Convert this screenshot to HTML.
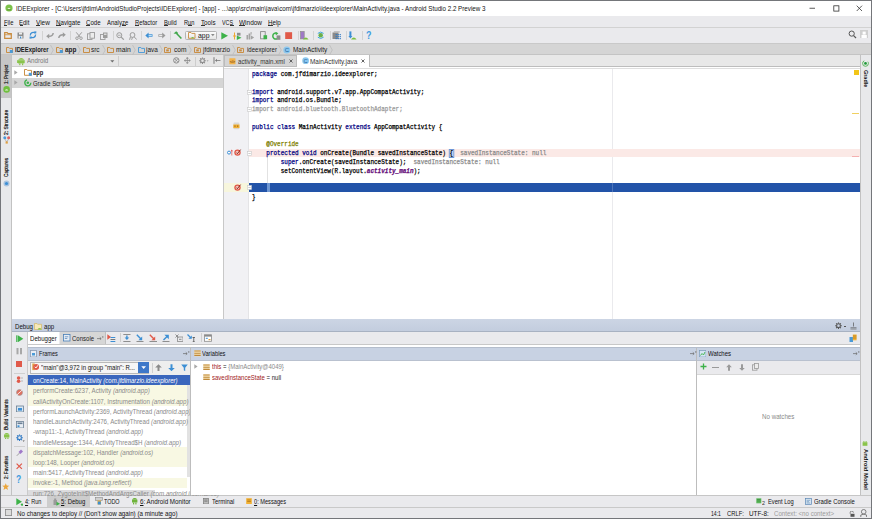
<!DOCTYPE html>
<html><head><meta charset="utf-8"><style>
html,body{margin:0;padding:0;}
body{width:872px;height:519px;position:relative;overflow:hidden;background:#fff;font-family:"Liberation Sans",sans-serif;}
body>div,body>svg{position:absolute;}
.t{white-space:pre;transform-origin:0 0;}
</style></head><body>
<div style="left:0px;top:0px;width:872px;height:519px;background:#ffffff;"></div>
<div style="left:0px;top:0px;width:872px;height:16px;background:#ffffff;"></div>
<div style="left:0px;top:16px;width:872px;height:11px;background:#eaeaed;"></div>
<div style="left:0px;top:27px;width:872px;height:1px;background:#d2d2d2;"></div>
<div style="left:0px;top:28px;width:872px;height:16px;background:#eaeaed;"></div>
<div style="left:0px;top:43px;width:872px;height:1px;background:#c9c9c9;"></div>
<div style="left:0px;top:44px;width:872px;height:10.5px;background:#d5d5d5;"></div>
<div style="left:0px;top:54px;width:872px;height:1px;background:#c4c4c4;"></div>
<div style="left:0px;top:55px;width:12px;height:440px;background:#e8e9eb;"></div>
<div style="left:11px;top:55px;width:1px;height:440px;background:#c2c2c2;"></div>
<div style="left:1px;top:55px;width:10px;height:43px;background:#c6c6c6;"></div>
<div style="left:860px;top:55px;width:11px;height:440px;background:#e8e9eb;"></div>
<div style="left:860px;top:55px;width:1px;height:440px;background:#c2c2c2;"></div>
<div style="left:12px;top:55px;width:211px;height:11.5px;background:#e6e6e6;"></div>
<div style="left:12px;top:66px;width:211px;height:1px;background:#cfcfcf;"></div>
<div style="left:12px;top:67px;width:211px;height:252px;background:#ffffff;"></div>
<div style="left:12px;top:77.5px;width:211px;height:10.5px;background:#d5d5d5;"></div>
<div style="left:223px;top:55px;width:1px;height:264px;background:#c8c8c8;"></div>
<div style="left:224px;top:55px;width:636px;height:11.5px;background:#e8e8e8;"></div>
<div style="left:224px;top:55px;width:73px;height:11.5px;background:#d5d5d5;box-sizing:border-box;border:0.8px solid #bcbcbc;border-bottom:none;"></div>
<div style="left:297px;top:55px;width:72px;height:12px;background:#ffffff;"></div>
<div style="left:224px;top:66px;width:73px;height:1px;background:#bdbdbd;"></div>
<div style="left:369px;top:66px;width:491px;height:1px;background:#bdbdbd;"></div>
<div style="left:224px;top:68px;width:636px;height:1px;background:#dedede;"></div>
<div style="left:224px;top:69px;width:636px;height:250px;background:#ffffff;"></div>
<div style="left:224px;top:69px;width:24px;height:250px;background:#f1f1f4;"></div>
<div style="left:248px;top:69px;width:1px;height:250px;background:#e4e4e6;"></div>
<div style="left:611.5px;top:69px;width:1px;height:250px;background:#eaeaed;"></div>
<div style="left:249px;top:148.5px;width:611px;height:8px;background:#fbe9e6;"></div>
<div style="left:224px;top:183px;width:25px;height:8.7px;background:#f7f6dd;"></div>
<div style="left:249px;top:183px;width:611px;height:8.7px;background:#2253a8;"></div>
<div style="left:611.5px;top:183px;width:1px;height:8.7px;background:#4c74b9;"></div>
<div style="left:267px;top:183px;width:3px;height:8.7px;background:#6f97d2;"></div>
<div style="left:267.3px;top:157px;width:0.8px;height:26px;background:#e2e2e2;"></div>
<div style="left:853.5px;top:70px;width:5px;height:5px;background:#f2c518;"></div>
<div style="left:852px;top:113px;width:7px;height:1px;background:#f0d060;"></div>
<div style="left:852px;top:156px;width:7px;height:1px;background:#f5b0b0;"></div>
<div style="left:852px;top:190px;width:7px;height:1px;background:#2253a8;"></div>
<div style="left:12px;top:319px;width:848px;height:0.6px;background:#b8c2d2;"></div>
<div style="left:12px;top:319.3px;width:848px;height:12.3px;background:linear-gradient(#ccd5e4,#c2ccde);"></div>
<div style="left:12px;top:331px;width:848px;height:0.7px;background:#a8b2c2;"></div>
<div style="left:12px;top:331.6px;width:848px;height:12.9px;background:#eaeaed;"></div>
<div style="left:12px;top:344px;width:848px;height:1px;background:#c8c8c8;"></div>
<div style="left:12px;top:345px;width:848px;height:2px;background:#ffffff;"></div>
<div style="left:12px;top:331.6px;width:15px;height:164px;background:#eaeaed;"></div>
<div style="left:26.6px;top:331.6px;width:1px;height:164px;background:#cbcbcb;"></div>
<div style="left:14px;top:372.5px;width:11px;height:1px;background:#d0d0d0;"></div>
<div style="left:14px;top:416.5px;width:11px;height:1px;background:#d0d0d0;"></div>
<div style="left:14px;top:446px;width:11px;height:1px;background:#d0d0d0;"></div>
<div style="left:27.6px;top:331.6px;width:31.9px;height:12.9px;background:#ffffff;"></div>
<div style="left:59.5px;top:331.6px;width:45px;height:12.9px;background:#d6d6d6;"></div>
<div style="left:104.5px;top:331.6px;width:1px;height:12.9px;background:#c0c0c0;"></div>
<div style="left:119.5px;top:333px;width:1px;height:9px;background:#cfcfcf;"></div>
<div style="left:200.5px;top:333px;width:1px;height:9px;background:#cfcfcf;"></div>
<div style="left:28px;top:347px;width:162.5px;height:13px;background:#c8d2e3;"></div>
<div style="left:28px;top:359.5px;width:832px;height:1px;background:#b9c1cf;"></div>
<div style="left:190px;top:347px;width:1px;height:148px;background:#bdbdbd;"></div>
<div style="left:191px;top:347px;width:505px;height:13px;background:#c8d2e3;"></div>
<div style="left:696px;top:347px;width:1px;height:148px;background:#bdbdbd;"></div>
<div style="left:697px;top:347px;width:163px;height:13px;background:#c8d2e3;"></div>
<div style="left:28px;top:347px;width:832px;height:0.6px;background:#b4bdcc;"></div>
<div style="left:28px;top:360.5px;width:162px;height:14px;background:#eeeeee;"></div>
<div style="left:30px;top:361.5px;width:119px;height:12px;background:#f6f6f6;box-sizing:border-box;border:1px solid #b9b9b9;"></div>
<div style="left:138px;top:362px;width:10.6px;height:11.3px;background:#3e78c9;"></div>
<div style="left:151.5px;top:362.5px;width:1px;height:10px;background:#d0d0d0;"></div>
<div style="left:28px;top:375px;width:162px;height:120.5px;background:#ffffff;"></div>
<div style="left:28px;top:375.3px;width:162px;height:9.7px;background:#3a66bd;"></div>
<div style="left:28px;top:385px;width:159px;height:20.5px;background:#f8f8e3;"></div>
<div style="left:28px;top:447.2px;width:159px;height:20.3px;background:#f8f8e3;"></div>
<div style="left:28px;top:477.6px;width:159px;height:10.4px;background:#f8f8e3;"></div>
<div style="left:186.5px;top:385px;width:3.5px;height:92px;background:#e2e2e2;"></div>
<div style="left:28px;top:489.5px;width:127px;height:6px;background:#e3e3e3;"></div>
<div style="left:697px;top:360.5px;width:163px;height:14px;background:#eaeaed;"></div>
<div style="left:697px;top:374.3px;width:163px;height:0.8px;background:#d7d7d7;"></div>
<div style="left:0px;top:495px;width:872px;height:12px;background:#eaeaed;"></div>
<div style="left:0px;top:494.8px;width:872px;height:0.8px;background:#c6c6c6;"></div>
<div style="left:46.5px;top:495.6px;width:43px;height:11.4px;background:#cdcdcd;"></div>
<div style="left:0px;top:506.8px;width:872px;height:0.8px;background:#c9c9c9;"></div>
<div style="left:0px;top:507.5px;width:872px;height:11px;background:#eaeaed;"></div>
<div style="left:0px;top:0px;width:872px;height:1px;background:#74767a;"></div>
<div style="left:0px;top:518px;width:872px;height:1px;background:#74767a;"></div>
<div style="left:0px;top:0px;width:1px;height:519px;background:#74767a;"></div>
<div style="left:870.6px;top:0px;width:1.4px;height:519px;background:#74767a;"></div>
<div class="t" style="left:15.80px;top:4.50px;font-family:'Liberation Sans';font-size:7.8px;line-height:7.8px;color:#111;font-weight:normal;font-style:normal;transform:scaleX(0.8004);">IDEExplorer - [C:\Users\jfdim\AndroidStudioProjects\IDEExplorer] - [app] - ...\app\src\main\java\com\jfdimarzio\ideexplorer\MainActivity.java - Android Studio 2.2 Preview 3</div>
<div class="t" style="left:3.50px;top:18.54px;font-family:'Liberation Sans';font-size:7.4px;line-height:7.4px;color:#111;font-weight:normal;font-style:normal;transform:scaleX(0.7885);">File</div>
<div class="t" style="left:19.30px;top:18.54px;font-family:'Liberation Sans';font-size:7.4px;line-height:7.4px;color:#111;font-weight:normal;font-style:normal;transform:scaleX(0.8078);">Edit</div>
<div class="t" style="left:36.10px;top:18.54px;font-family:'Liberation Sans';font-size:7.4px;line-height:7.4px;color:#111;font-weight:normal;font-style:normal;transform:scaleX(0.8684);">View</div>
<div class="t" style="left:55.60px;top:18.54px;font-family:'Liberation Sans';font-size:7.4px;line-height:7.4px;color:#111;font-weight:normal;font-style:normal;transform:scaleX(0.8364);">Navigate</div>
<div class="t" style="left:85.70px;top:18.54px;font-family:'Liberation Sans';font-size:7.4px;line-height:7.4px;color:#111;font-weight:normal;font-style:normal;transform:scaleX(0.8262);">Code</div>
<div class="t" style="left:107.00px;top:18.54px;font-family:'Liberation Sans';font-size:7.4px;line-height:7.4px;color:#111;font-weight:normal;font-style:normal;transform:scaleX(0.8062);">Analyze</div>
<div class="t" style="left:134.60px;top:18.54px;font-family:'Liberation Sans';font-size:7.4px;line-height:7.4px;color:#111;font-weight:normal;font-style:normal;transform:scaleX(0.7911);">Refactor</div>
<div class="t" style="left:164.20px;top:18.54px;font-family:'Liberation Sans';font-size:7.4px;line-height:7.4px;color:#111;font-weight:normal;font-style:normal;transform:scaleX(0.7726);">Build</div>
<div class="t" style="left:183.90px;top:18.54px;font-family:'Liberation Sans';font-size:7.4px;line-height:7.4px;color:#111;font-weight:normal;font-style:normal;transform:scaleX(0.7668);">Run</div>
<div class="t" style="left:201.20px;top:18.54px;font-family:'Liberation Sans';font-size:7.4px;line-height:7.4px;color:#111;font-weight:normal;font-style:normal;transform:scaleX(0.8398);">Tools</div>
<div class="t" style="left:221.70px;top:18.54px;font-family:'Liberation Sans';font-size:7.4px;line-height:7.4px;color:#111;font-weight:normal;font-style:normal;transform:scaleX(0.7235);">VCS</div>
<div class="t" style="left:238.60px;top:18.54px;font-family:'Liberation Sans';font-size:7.4px;line-height:7.4px;color:#111;font-weight:normal;font-style:normal;transform:scaleX(0.8746);">Window</div>
<div class="t" style="left:268.00px;top:18.54px;font-family:'Liberation Sans';font-size:7.4px;line-height:7.4px;color:#111;font-weight:normal;font-style:normal;transform:scaleX(0.8419);">Help</div>
<div style="left:3.9px;top:25.0px;width:3.5px;height:0.75px;background:#333;"></div>
<div style="left:19.5px;top:25.0px;width:3.8px;height:0.75px;background:#333;"></div>
<div style="left:36.2px;top:25.0px;width:4.2px;height:0.75px;background:#333;"></div>
<div style="left:55.8px;top:25.0px;width:4.8px;height:0.75px;background:#333;"></div>
<div style="left:86px;top:25.0px;width:4.3px;height:0.75px;background:#333;"></div>
<div style="left:122.4px;top:25.0px;width:3.2px;height:0.75px;background:#333;"></div>
<div style="left:134.6px;top:25.0px;width:4px;height:0.75px;background:#333;"></div>
<div style="left:164px;top:25.0px;width:4px;height:0.75px;background:#333;"></div>
<div style="left:188px;top:25.0px;width:3.8px;height:0.75px;background:#333;"></div>
<div style="left:200.8px;top:25.0px;width:4px;height:0.75px;background:#333;"></div>
<div style="left:230px;top:25.0px;width:3.5px;height:0.75px;background:#333;"></div>
<div style="left:238.8px;top:25.0px;width:6px;height:0.75px;background:#333;"></div>
<div style="left:268.2px;top:25.0px;width:4.5px;height:0.75px;background:#333;"></div>
<div class="t" style="left:15.00px;top:45.87px;font-family:'Liberation Sans';font-size:7.6px;line-height:7.6px;color:#1a1a1a;font-weight:bold;font-style:normal;transform:scaleX(0.7730);">IDEExplorer</div>
<div class="t" style="left:64.60px;top:45.87px;font-family:'Liberation Sans';font-size:7.6px;line-height:7.6px;color:#1a1a1a;font-weight:bold;font-style:normal;transform:scaleX(0.8435);">app</div>
<div class="t" style="left:91.40px;top:45.87px;font-family:'Liberation Sans';font-size:7.6px;line-height:7.6px;color:#1a1a1a;font-weight:normal;font-style:normal;transform:scaleX(0.8494);">src</div>
<div class="t" style="left:115.60px;top:45.87px;font-family:'Liberation Sans';font-size:7.6px;line-height:7.6px;color:#1a1a1a;font-weight:normal;font-style:normal;transform:scaleX(0.8926);">main</div>
<div class="t" style="left:146.00px;top:45.87px;font-family:'Liberation Sans';font-size:7.6px;line-height:7.6px;color:#1a1a1a;font-weight:normal;font-style:normal;transform:scaleX(0.8466);">java</div>
<div class="t" style="left:173.50px;top:45.87px;font-family:'Liberation Sans';font-size:7.6px;line-height:7.6px;color:#1a1a1a;font-weight:normal;font-style:normal;transform:scaleX(0.8705);">com</div>
<div class="t" style="left:203.00px;top:45.87px;font-family:'Liberation Sans';font-size:7.6px;line-height:7.6px;color:#1a1a1a;font-weight:normal;font-style:normal;transform:scaleX(0.8308);">jfdimarzio</div>
<div class="t" style="left:246.50px;top:45.87px;font-family:'Liberation Sans';font-size:7.6px;line-height:7.6px;color:#1a1a1a;font-weight:normal;font-style:normal;transform:scaleX(0.7957);">ideexplorer</div>
<div class="t" style="left:292.70px;top:45.87px;font-family:'Liberation Sans';font-size:7.6px;line-height:7.6px;color:#1a1a1a;font-weight:normal;font-style:normal;transform:scaleX(0.8466);">MainActivity</div>
<div class="t" style="left:26.80px;top:57.37px;font-family:'Liberation Sans';font-size:7.6px;line-height:7.6px;color:#7a7a7a;font-weight:normal;font-style:normal;transform:scaleX(0.8134);">Android</div>
<div class="t" style="left:33.00px;top:68.97px;font-family:'Liberation Sans';font-size:7.6px;line-height:7.6px;color:#1a1a1a;font-weight:bold;font-style:normal;transform:scaleX(0.7621);">app</div>
<div class="t" style="left:33.00px;top:79.57px;font-family:'Liberation Sans';font-size:7.6px;line-height:7.6px;color:#1a1a1a;font-weight:normal;font-style:normal;transform:scaleX(0.7688);">Gradle Scripts</div>
<div class="t" style="left:238.00px;top:57.77px;font-family:'Liberation Sans';font-size:7.6px;line-height:7.6px;color:#333;font-weight:normal;font-style:normal;transform:scaleX(0.8095);">activity_main.xml</div>
<div class="t" style="left:310.30px;top:57.77px;font-family:'Liberation Sans';font-size:7.6px;line-height:7.6px;color:#333;font-weight:normal;font-style:normal;transform:scaleX(0.8464);">MainActivity.java</div>
<div class="t" style="left:251.50px;top:71.84px;font-family:'Liberation Mono';font-size:6.6px;line-height:6.6px;color:#000;font-weight:normal;font-style:normal;transform:scaleX(0.9070);-webkit-text-stroke:0.25px currentColor;"><span style="color:#000080">package</span> com.jfdimarzio.ideexplorer;</div>
<div class="t" style="left:251.50px;top:89.84px;font-family:'Liberation Mono';font-size:6.6px;line-height:6.6px;color:#000;font-weight:normal;font-style:normal;transform:scaleX(0.9070);-webkit-text-stroke:0.25px currentColor;"><span style="color:#000080">import</span> android.support.v7.app.AppCompatActivity;</div>
<div class="t" style="left:251.50px;top:97.84px;font-family:'Liberation Mono';font-size:6.6px;line-height:6.6px;color:#000;font-weight:normal;font-style:normal;transform:scaleX(0.9070);-webkit-text-stroke:0.25px currentColor;"><span style="color:#000080">import</span> android.os.Bundle;</div>
<div class="t" style="left:251.50px;top:106.84px;font-family:'Liberation Mono';font-size:6.6px;line-height:6.6px;color:#000;font-weight:normal;font-style:normal;transform:scaleX(0.9070);-webkit-text-stroke:0.25px currentColor;"><span style="color:#9a9a9a">import android.bluetooth.BluetoothAdapter;</span></div>
<div class="t" style="left:251.50px;top:124.84px;font-family:'Liberation Mono';font-size:6.6px;line-height:6.6px;color:#000;font-weight:normal;font-style:normal;transform:scaleX(0.9070);-webkit-text-stroke:0.25px currentColor;"><span style="color:#000080">public</span> <span style="color:#000080">class</span> MainActivity <span style="color:#000080">extends</span> AppCompatActivity {</div>
<div class="t" style="left:251.50px;top:141.84px;font-family:'Liberation Mono';font-size:6.6px;line-height:6.6px;color:#000;font-weight:normal;font-style:normal;transform:scaleX(0.9070);-webkit-text-stroke:0.25px currentColor;">    <span style="color:#808000">@Override</span></div>
<div class="t" style="left:251.50px;top:150.84px;font-family:'Liberation Mono';font-size:6.6px;line-height:6.6px;color:#000;font-weight:normal;font-style:normal;transform:scaleX(0.9070);-webkit-text-stroke:0.25px currentColor;">    <span style="color:#000080">protected</span> <span style="color:#000080">void</span> onCreate(Bundle savedInstanceState) <span style="background:#b8d2f5;outline:0.5px solid #6e98d8">{</span>  <span style="color:#8a8a8a">savedInstanceState: null</span></div>
<div class="t" style="left:251.50px;top:159.84px;font-family:'Liberation Mono';font-size:6.6px;line-height:6.6px;color:#000;font-weight:normal;font-style:normal;transform:scaleX(0.9070);-webkit-text-stroke:0.25px currentColor;">        <span style="color:#000080">super</span>.onCreate(savedInstanceState);  <span style="color:#8a8a8a">savedInstanceState: null</span></div>
<div class="t" style="left:251.50px;top:168.84px;font-family:'Liberation Mono';font-size:6.6px;line-height:6.6px;color:#000;font-weight:normal;font-style:normal;transform:scaleX(0.9070);-webkit-text-stroke:0.25px currentColor;">        setContentView(R.layout.<b style="color:#660e7a;font-style:italic">activity_main</b>);</div>
<div class="t" style="left:251.50px;top:194.84px;font-family:'Liberation Mono';font-size:6.6px;line-height:6.6px;color:#000;font-weight:normal;font-style:normal;transform:scaleX(0.9070);-webkit-text-stroke:0.25px currentColor;">}</div>
<div class="t" style="left:14.50px;top:322.67px;font-family:'Liberation Sans';font-size:7.6px;line-height:7.6px;color:#111;font-weight:normal;font-style:normal;transform:scaleX(0.8039);">Debug</div>
<div class="t" style="left:44.00px;top:322.67px;font-family:'Liberation Sans';font-size:7.6px;line-height:7.6px;color:#111;font-weight:normal;font-style:normal;transform:scaleX(0.8049);">app</div>
<div class="t" style="left:30.40px;top:334.87px;font-family:'Liberation Sans';font-size:7.6px;line-height:7.6px;color:#111;font-weight:normal;font-style:normal;transform:scaleX(0.8004);">Debugger</div>
<div class="t" style="left:71.90px;top:334.87px;font-family:'Liberation Sans';font-size:7.6px;line-height:7.6px;color:#222;font-weight:normal;font-style:normal;transform:scaleX(0.7928);">Console</div>
<div class="t" style="left:39.00px;top:349.87px;font-family:'Liberation Sans';font-size:7.6px;line-height:7.6px;color:#111;font-weight:normal;font-style:normal;transform:scaleX(0.7301);">Frames</div>
<div class="t" style="left:202.30px;top:349.87px;font-family:'Liberation Sans';font-size:7.6px;line-height:7.6px;color:#111;font-weight:normal;font-style:normal;transform:scaleX(0.7554);">Variables</div>
<div class="t" style="left:708.00px;top:349.87px;font-family:'Liberation Sans';font-size:7.6px;line-height:7.6px;color:#111;font-weight:normal;font-style:normal;transform:scaleX(0.7859);">Watches</div>
<div class="t" style="left:41.20px;top:364.41px;font-family:'Liberation Sans';font-size:7.2px;line-height:7.2px;color:#111;font-weight:normal;font-style:normal;transform:scaleX(0.8408);">"main"@3,972 in group "main": R...</div>
<div class="t" style="left:32.80px;top:377.07px;font-family:'Liberation Sans';font-size:7px;line-height:7px;color:#fff;font-weight:normal;font-style:normal;transform:scaleX(0.8600);">onCreate:14, MainActivity <i style="color:#fff">(com.jfdimarzio.ideexplorer)</i></div>
<div class="t" style="left:32.80px;top:387.31px;font-family:'Liberation Sans';font-size:7px;line-height:7px;color:#8a8a8a;font-weight:normal;font-style:normal;transform:scaleX(0.8850);">performCreate:6237, Activity <i style="color:#8a8a8a">(android.app)</i></div>
<div class="t" style="left:32.80px;top:397.55px;font-family:'Liberation Sans';font-size:7px;line-height:7px;color:#8a8a8a;font-weight:normal;font-style:normal;transform:scaleX(0.8850);">callActivityOnCreate:1107, Instrumentation <i style="color:#8a8a8a">(android.app)</i></div>
<div class="t" style="left:32.80px;top:407.79px;font-family:'Liberation Sans';font-size:7px;line-height:7px;color:#8a8a8a;font-weight:normal;font-style:normal;transform:scaleX(0.8850);">performLaunchActivity:2369, ActivityThread <i style="color:#8a8a8a">(android.app)</i></div>
<div class="t" style="left:32.80px;top:418.03px;font-family:'Liberation Sans';font-size:7px;line-height:7px;color:#8a8a8a;font-weight:normal;font-style:normal;transform:scaleX(0.8850);">handleLaunchActivity:2476, ActivityThread <i style="color:#8a8a8a">(android.app)</i></div>
<div class="t" style="left:32.80px;top:428.27px;font-family:'Liberation Sans';font-size:7px;line-height:7px;color:#8a8a8a;font-weight:normal;font-style:normal;transform:scaleX(0.8850);">-wrap11:-1, ActivityThread <i style="color:#8a8a8a">(android.app)</i></div>
<div class="t" style="left:32.80px;top:438.51px;font-family:'Liberation Sans';font-size:7px;line-height:7px;color:#8a8a8a;font-weight:normal;font-style:normal;transform:scaleX(0.8850);">handleMessage:1344, ActivityThread$H <i style="color:#8a8a8a">(android.app)</i></div>
<div class="t" style="left:32.80px;top:448.75px;font-family:'Liberation Sans';font-size:7px;line-height:7px;color:#8a8a8a;font-weight:normal;font-style:normal;transform:scaleX(0.8850);">dispatchMessage:102, Handler <i style="color:#8a8a8a">(android.os)</i></div>
<div class="t" style="left:32.80px;top:458.99px;font-family:'Liberation Sans';font-size:7px;line-height:7px;color:#8a8a8a;font-weight:normal;font-style:normal;transform:scaleX(0.8850);">loop:148, Looper <i style="color:#8a8a8a">(android.os)</i></div>
<div class="t" style="left:32.80px;top:469.23px;font-family:'Liberation Sans';font-size:7px;line-height:7px;color:#8a8a8a;font-weight:normal;font-style:normal;transform:scaleX(0.8850);">main:5417, ActivityThread <i style="color:#8a8a8a">(android.app)</i></div>
<div class="t" style="left:32.80px;top:479.47px;font-family:'Liberation Sans';font-size:7px;line-height:7px;color:#8a8a8a;font-weight:normal;font-style:normal;transform:scaleX(0.8850);">invoke:-1, Method <i style="color:#8a8a8a">(java.lang.reflect)</i></div>
<div style="left:28px;top:489.6px;width:127px;height:5.6px;background:#dcdcde;"></div>
<div class="t" style="left:32.80px;top:489.71px;font-family:'Liberation Sans';font-size:7px;line-height:7px;color:#8a8a8a;font-weight:normal;font-style:normal;transform:scaleX(0.8850);">run:726, ZygoteInit$MethodAndArgsCaller <i style="color:#8a8a8a">(com.android.internal.os)</i></div>
<div style="left:190px;top:486px;width:40px;height:9px;background:#ffffff;"></div>
<div style="left:190px;top:347px;width:1px;height:148px;background:#bdbdbd;"></div>
<div class="t" style="left:212.00px;top:363.37px;font-family:'Liberation Sans';font-size:7px;line-height:7px;color:#222;font-weight:normal;font-style:normal;transform:scaleX(0.8600);"><span style="color:#a01818">this</span> = <span style="color:#8a8a8a">{MainActivity@4049}</span></div>
<div class="t" style="left:212.00px;top:373.57px;font-family:'Liberation Sans';font-size:7px;line-height:7px;color:#222;font-weight:normal;font-style:normal;transform:scaleX(0.8600);"><span style="color:#a01818">savedInstanceState</span> = null</div>
<div class="t" style="left:761.60px;top:412.91px;font-family:'Liberation Sans';font-size:7.2px;line-height:7.2px;color:#8a8a8a;font-weight:normal;font-style:normal;transform:scaleX(0.8626);">No watches</div>
<div class="t" style="left:25.00px;top:498.37px;font-family:'Liberation Sans';font-size:7.6px;line-height:7.6px;color:#111;font-weight:normal;font-style:normal;transform:scaleX(0.7280);"><u>4</u>: Run</div>
<div class="t" style="left:61.00px;top:498.37px;font-family:'Liberation Sans';font-size:7.6px;line-height:7.6px;color:#111;font-weight:normal;font-style:normal;transform:scaleX(0.7846);"><u>5</u>: Debug</div>
<div class="t" style="left:104.00px;top:498.37px;font-family:'Liberation Sans';font-size:7.6px;line-height:7.6px;color:#111;font-weight:normal;font-style:normal;transform:scaleX(0.7152);">TODO</div>
<div class="t" style="left:140.30px;top:498.37px;font-family:'Liberation Sans';font-size:7.6px;line-height:7.6px;color:#111;font-weight:normal;font-style:normal;transform:scaleX(0.8225);"><u>6</u>: Android Monitor</div>
<div class="t" style="left:211.60px;top:498.37px;font-family:'Liberation Sans';font-size:7.6px;line-height:7.6px;color:#111;font-weight:normal;font-style:normal;transform:scaleX(0.7804);">Terminal</div>
<div class="t" style="left:254.00px;top:498.37px;font-family:'Liberation Sans';font-size:7.6px;line-height:7.6px;color:#111;font-weight:normal;font-style:normal;transform:scaleX(0.7428);"><u>0</u>: Messages</div>
<div class="t" style="left:768.00px;top:498.37px;font-family:'Liberation Sans';font-size:7.6px;line-height:7.6px;color:#111;font-weight:normal;font-style:normal;transform:scaleX(0.7514);">Event Log</div>
<div class="t" style="left:814.00px;top:498.37px;font-family:'Liberation Sans';font-size:7.6px;line-height:7.6px;color:#111;font-weight:normal;font-style:normal;transform:scaleX(0.7732);">Gradle Console</div>
<div class="t" style="left:16.50px;top:509.77px;font-family:'Liberation Sans';font-size:7.6px;line-height:7.6px;color:#111;font-weight:normal;font-style:normal;transform:scaleX(0.8187);">No changes to deploy // (Don't show again) (a minute ago)</div>
<div class="t" style="left:710.80px;top:509.77px;font-family:'Liberation Sans';font-size:7.6px;line-height:7.6px;color:#111;font-weight:normal;font-style:normal;transform:scaleX(0.6698);">14:1</div>
<div class="t" style="left:726.60px;top:509.77px;font-family:'Liberation Sans';font-size:7.6px;line-height:7.6px;color:#111;font-weight:normal;font-style:normal;transform:scaleX(0.7653);">CRLF:</div>
<div class="t" style="left:749.30px;top:509.77px;font-family:'Liberation Sans';font-size:7.6px;line-height:7.6px;color:#111;font-weight:normal;font-style:normal;transform:scaleX(0.8339);">UTF-8:</div>
<div class="t" style="left:774.00px;top:509.77px;font-family:'Liberation Sans';font-size:7.6px;line-height:7.6px;color:#9a9a9a;font-weight:normal;font-style:normal;transform:scaleX(0.8074);">Context: &lt;no context&gt;</div>
<svg style="left:4.5px;top:3.5px" width="8" height="8" viewBox="0 0 8 8"><circle cx="4" cy="4" r="3.6" fill="#7cc14a"/><path d="M2.2 5.2 Q4 2.2 5.8 5.2 Z" fill="#e8f5da"/><rect x="2" y="5.3" width="4" height="1" fill="#5a9a30"/></svg>
<svg style="left:809px;top:7px" width="7" height="2" viewBox="0 0 7 2"><rect x="0.5" y="0.8" width="5.5" height="0.8" fill="#333"/></svg>
<svg style="left:832.5px;top:4.5px" width="7" height="7" viewBox="0 0 7 7"><rect x="0.8" y="0.8" width="5.1" height="5.3" fill="none" stroke="#333" stroke-width="0.8"/></svg>
<svg style="left:856px;top:4.5px" width="7" height="7" viewBox="0 0 7 7"><path d="M0.7 0.7 L6 6 M6 0.7 L0.7 6" stroke="#333" stroke-width="0.8"/></svg>
<svg style="left:3.8px;top:32.3px" width="8" height="7" viewBox="0 0 8 7"><path d="M0.7 0.7 H3.2 L4 1.7 H7.3 V6.3 H0.7 Z" fill="none" stroke="#c98b3e" stroke-width="1.2"/><rect x="0.7" y="2.4" width="6.6" height="0.8" fill="#c98b3e"/></svg>
<svg style="left:17px;top:32.0px" width="8" height="7" viewBox="0 0 8 7"><path d="M0.5 0.5 H6.5 V6.5 H0.5 Z" fill="#8d8d8d"/><rect x="2" y="0.5" width="3" height="2" fill="#ececec"/><rect x="1.6" y="4" width="3.8" height="2.5" fill="#ececec"/><rect x="3" y="4.6" width="1.2" height="1.8" fill="#3d8fd4"/></svg>
<svg style="left:29px;top:31.2px" width="8" height="8" viewBox="0 0 8 8"><path d="M6.3 2.2 A3 3 0 0 0 1.3 4.5" fill="none" stroke="#3d8fd4" stroke-width="1.3"/><path d="M1.6 5.8 A3 3 0 0 0 6.6 3.5" fill="none" stroke="#3d8fd4" stroke-width="1.3"/><path d="M5 0.2 L7.5 0.5 L7 3 Z" fill="#3d8fd4"/><path d="M2.9 7.8 L0.4 7.5 L0.9 5 Z" fill="#3d8fd4"/></svg>
<div style="left:41.7px;top:31px;width:0.8px;height:9px;background:#d3d3d3;"></div>
<svg style="left:45.5px;top:32.2px" width="8" height="7" viewBox="0 0 8 7"><path d="M7.2 1 Q6.8 4.5 2.5 4.3" fill="none" stroke="#9b9b9b" stroke-width="1.5"/><path d="M0.2 4.3 L3.2 1.8 L3.2 6.8 Z" fill="#9b9b9b"/></svg>
<svg style="left:58.3px;top:32.2px" width="8" height="7" viewBox="0 0 8 7"><path d="M0.8 6 Q1.2 2.5 5.5 2.7" fill="none" stroke="#9b9b9b" stroke-width="1.5"/><path d="M7.8 2.7 L4.8 0.2 L4.8 5.2 Z" fill="#9b9b9b"/></svg>
<div style="left:70.4px;top:31px;width:0.8px;height:9px;background:#d3d3d3;"></div>
<svg style="left:74.6px;top:31.5px" width="8" height="8" viewBox="0 0 8 8"><path d="M1.2 0.3 L5.2 5.2 M6.8 0.3 L2.8 5.2" stroke="#9b9b9b" stroke-width="1"/><circle cx="2" cy="6.2" r="1.3" fill="none" stroke="#9b9b9b" stroke-width="0.9"/><circle cx="6" cy="6.2" r="1.3" fill="none" stroke="#9b9b9b" stroke-width="0.9"/></svg>
<svg style="left:87.2px;top:31.5px" width="8" height="8" viewBox="0 0 8 8"><rect x="0.5" y="1.8" width="4.5" height="5.7" fill="none" stroke="#9b9b9b" stroke-width="0.9"/><rect x="3" y="0.5" width="4.5" height="5.7" fill="#ececec" stroke="#9b9b9b" stroke-width="0.9"/></svg>
<svg style="left:100.2px;top:31.5px" width="8" height="8" viewBox="0 0 8 8"><rect x="0.5" y="2.5" width="4.5" height="5" fill="none" stroke="#9b9b9b" stroke-width="0.9"/><rect x="3" y="0.5" width="4.5" height="5.5" fill="#9b9b9b"/><rect x="4" y="1.6" width="2.5" height="1.2" fill="#ececec"/></svg>
<div style="left:112.7px;top:31px;width:0.8px;height:9px;background:#d3d3d3;"></div>
<svg style="left:116.2px;top:31.5px" width="8.5" height="8" viewBox="0 0 8.5 8"><circle cx="3.3" cy="3.2" r="2.5" fill="none" stroke="#9b9b9b" stroke-width="1"/><path d="M5.2 5.1 L7.8 7.6" stroke="#9b9b9b" stroke-width="1.3"/><rect x="2" y="2.8" width="2.6" height="0.8" fill="#9b9b9b"/></svg>
<svg style="left:128.8px;top:31.5px" width="8.5" height="8" viewBox="0 0 8.5 8"><circle cx="3.5" cy="3" r="2.4" fill="none" stroke="#9b9b9b" stroke-width="1"/><path d="M5.2 4.9 L7.8 7.6 M1.4 5 L0.6 7.8 M3.5 5.4 L2.6 7.8" stroke="#9b9b9b" stroke-width="1"/></svg>
<div style="left:141.3px;top:31px;width:0.8px;height:9px;background:#d3d3d3;"></div>
<svg style="left:145px;top:31.9px" width="8" height="7" viewBox="0 0 8 7"><path d="M0.3 3.5 L3.6 0.4 V2.2 H7.5 V4.8 H3.6 V6.6 Z" fill="#3d8fd4"/><rect x="3.6" y="2.9" width="3.2" height="1.2" fill="#bfe0f8"/></svg>
<svg style="left:157.8px;top:31.9px" width="8" height="7" viewBox="0 0 8 7"><path d="M7.5 3.5 L4.2 0.4 V2.2 H0.4 V4.8 H4.2 V6.6 Z" fill="#9b9b9b"/><rect x="1.1" y="2.9" width="3.2" height="1.2" fill="#ececec"/></svg>
<div style="left:170.4px;top:31px;width:0.8px;height:9px;background:#d3d3d3;"></div>
<svg style="left:173.4px;top:31.3px" width="9" height="8.5" viewBox="0 0 9 8.5"><path d="M0.6 2.6 L3.2 0.2 L5.2 1.9 L4.2 2.9 Z" fill="#3fa64a"/><path d="M3.6 2.4 L8.4 7.6" stroke="#3fa64a" stroke-width="1.5"/></svg>
<div style="left:185.4px;top:30.8px;width:31.3px;height:9.4px;background:linear-gradient(#fbfbfb,#e6e6e6);box-sizing:border-box;border:0.8px solid #b4b4b4;border-radius:1.5px;"></div>
<svg style="left:188px;top:32.3px" width="8" height="7" viewBox="0 0 8 7"><path d="M0.5 0.5 H3 L3.7 1.4 H7 V6.3 H0.5 Z" fill="none" stroke="#c98b3e" stroke-width="0.9"/><path d="M3 6.3 Q4.2 3.8 6.4 6.3 Z" fill="#7bbf3f"/></svg>
<svg style="left:210.5px;top:34.3px" width="4" height="3" viewBox="0 0 4 3"><path d="M0 0 H3.6 L1.8 2.2 Z" fill="#8a8a8a"/></svg>
<svg style="left:221px;top:31.6px" width="7.5" height="8" viewBox="0 0 7.5 8"><path d="M0.3 0.3 L7 3.8 L0.3 7.4 Z" fill="#3db249"/></svg>
<svg style="left:233px;top:31.5px" width="9" height="8" viewBox="0 0 9 8"><rect x="1" y="0.5" width="1" height="7" fill="#f0a830"/><rect x="0" y="3.5" width="3" height="1" fill="#f0a830"/><rect x="4" y="0.8" width="3.5" height="2.8" fill="#8d8d8d"/><path d="M3.8 3.5 L8.5 5.8 L3.8 8 Z" fill="#3db249"/></svg>
<svg style="left:246px;top:31.5px" width="8.5" height="8" viewBox="0 0 8.5 8"><rect x="0.5" y="3" width="1.6" height="4.5" fill="#a4a4a4"/><rect x="2.6" y="1.5" width="1.8" height="6" fill="#a4a4a4"/><rect x="4.6" y="0" width="1" height="2.5" fill="#a4a4a4"/><path d="M5 3.6 L8.2 5.6 L5 7.6 Z" fill="#a4a4a4"/></svg>
<svg style="left:259.5px;top:31.3px" width="8" height="8.5" viewBox="0 0 8 8.5"><rect x="0.6" y="0.6" width="4.6" height="7.2" fill="none" stroke="#8a8a8a" stroke-width="0.9"/><rect x="3.5" y="4.2" width="3.6" height="4" fill="#3db249"/></svg>
<svg style="left:271.8px;top:31.5px" width="9" height="8" viewBox="0 0 9 8"><path d="M5.2 1.4 A3 3 0 1 0 5 6.8" fill="none" stroke="#3db249" stroke-width="1.5"/><path d="M3.6 0 L6.4 1.4 L3.8 3.2 Z" fill="#3db249"/><rect x="4.6" y="3.4" width="3.8" height="4.4" fill="#8d8d8d"/></svg>
<svg style="left:285.3px;top:31.8px" width="7.5" height="7.5" viewBox="0 0 7.5 7.5"><rect x="0.2" y="0.2" width="6.9" height="6.9" fill="#e05a4a"/></svg>
<div style="left:298px;top:31px;width:0.8px;height:9px;background:#d3d3d3;"></div>
<svg style="left:300.2px;top:31.0px" width="9" height="9" viewBox="0 0 9 9"><rect x="0.6" y="0.5" width="3.6" height="7.4" fill="#9f78c8"/><rect x="0.6" y="0.5" width="3.6" height="7.4" fill="none" stroke="#8c8c8c" stroke-width="0.7"/><path d="M3 8.6 Q5.8 4.4 8.6 8.6 Z" fill="#7bbf3f"/></svg>
<div style="left:313.4px;top:31px;width:0.8px;height:9px;background:#d3d3d3;"></div>
<svg style="left:317px;top:31.3px" width="7.5" height="8.5" viewBox="0 0 7.5 8.5"><path d="M0.8 2.4 Q3.7 -0.2 6.6 2.4" fill="none" stroke="#40a9e0" stroke-width="1"/><path d="M0.8 6.2 Q3.7 8.8 6.6 6.2" fill="none" stroke="#40a9e0" stroke-width="1"/><circle cx="3.7" cy="4.3" r="2.2" fill="#6ab04c"/></svg>
<div style="left:329.5px;top:31px;width:0.8px;height:9px;background:#d3d3d3;"></div>
<svg style="left:332.3px;top:31.2px" width="9" height="8.5" viewBox="0 0 9 8.5"><rect x="0.5" y="1.5" width="6" height="6.5" fill="#8a8a8a"/><rect x="1.8" y="0.3" width="6" height="1.2" fill="#b0b0b0"/><g fill="#2f79c4"><rect x="3.6" y="3" width="1.2" height="1.2"/><rect x="5.6" y="3" width="1.2" height="1.2"/><rect x="7.6" y="3" width="1.2" height="1.2"/><rect x="3.6" y="5" width="1.2" height="1.2"/><rect x="5.6" y="5" width="1.2" height="1.2"/><rect x="7.6" y="5" width="1.2" height="1.2"/><rect x="3.6" y="7" width="1.2" height="1.2"/><rect x="5.6" y="7" width="1.2" height="1.2"/><rect x="7.6" y="7" width="1.2" height="1.2"/></g></svg>
<div style="left:345.6px;top:31px;width:0.8px;height:9px;background:#d3d3d3;"></div>
<svg style="left:348.4px;top:31.0px" width="9" height="9" viewBox="0 0 9 9"><rect x="1.4" y="0.4" width="2" height="5" fill="#3d8fd4"/><path d="M0.4 5 L4.4 5 L2.4 7.4 Z" fill="#3d8fd4"/><path d="M3 8.6 Q5.8 4.4 8.6 8.6 Z" fill="#7bbf3f"/></svg>
<div style="left:361.6px;top:31px;width:0.8px;height:9px;background:#d3d3d3;"></div>
<div class="t" style="left:366.20px;top:30.01px;font-family:'Liberation Sans';font-size:10.5px;line-height:10.5px;color:#3d9be0;font-weight:bold;font-style:normal;transform:scaleX(0.8500);">?</div>
<svg style="left:847.5px;top:29.8px" width="9" height="9" viewBox="0 0 9 9"><circle cx="3.7" cy="3.6" r="2.6" fill="none" stroke="#555" stroke-width="1"/><path d="M5.6 5.6 L8 8" stroke="#555" stroke-width="1.2"/></svg>
<svg style="left:860px;top:30px" width="8.3" height="8" viewBox="0 0 8.3 8"><rect x="0" y="0" width="8.3" height="8" fill="#cfcfcf"/><rect x="2.6" y="1.6" width="3.1" height="3" fill="#fff"/><rect x="1.5" y="5" width="5.3" height="3" fill="#fff"/></svg>
<div class="t" style="left:197.50px;top:31.83px;font-family:'Liberation Sans';font-size:8px;line-height:8px;color:#222;font-weight:normal;font-style:normal;transform:scaleX(0.8608);">app</div>
<svg style="left:6px;top:46.5px" width="7.5" height="6.5" viewBox="0 0 7.5 6.5"><path d="M0.5 0.5 H2.8 L3.5 1.4 H6.5 V5.5 H0.5 Z" fill="none" stroke="#c98b3e" stroke-width="0.95"/><rect x="3.8" y="3" width="3" height="3" fill="#4a9ad8"/></svg>
<svg style="left:49.6px;top:44.5px" width="4" height="10" viewBox="0 0 4 10"><path d="M0.5 0 L3.3 5 L0.5 10" fill="none" stroke="#bdbdbd" stroke-width="0.8"/></svg>
<svg style="left:56px;top:46.5px" width="7.5" height="6.5" viewBox="0 0 7.5 6.5"><path d="M0.5 0.5 H2.8 L3.5 1.4 H6.5 V5.5 H0.5 Z" fill="none" stroke="#c98b3e" stroke-width="0.95"/><rect x="3.8" y="3" width="3" height="3" fill="#4a9ad8"/></svg>
<svg style="left:77px;top:44.5px" width="4" height="10" viewBox="0 0 4 10"><path d="M0.5 0 L3.3 5 L0.5 10" fill="none" stroke="#bdbdbd" stroke-width="0.8"/></svg>
<svg style="left:83px;top:46.5px" width="7.5" height="6.5" viewBox="0 0 7.5 6.5"><path d="M0.5 0.5 H2.8 L3.5 1.4 H6.5 V5.5 H0.5 Z" fill="none" stroke="#c98b3e" stroke-width="0.95"/></svg>
<svg style="left:101.5px;top:44.5px" width="4" height="10" viewBox="0 0 4 10"><path d="M0.5 0 L3.3 5 L0.5 10" fill="none" stroke="#bdbdbd" stroke-width="0.8"/></svg>
<svg style="left:107.3px;top:46.5px" width="7.5" height="6.5" viewBox="0 0 7.5 6.5"><path d="M0.5 0.5 H2.8 L3.5 1.4 H6.5 V5.5 H0.5 Z" fill="none" stroke="#c98b3e" stroke-width="0.95"/></svg>
<svg style="left:131.5px;top:44.5px" width="4" height="10" viewBox="0 0 4 10"><path d="M0.5 0 L3.3 5 L0.5 10" fill="none" stroke="#bdbdbd" stroke-width="0.8"/></svg>
<svg style="left:137.6px;top:46.5px" width="7.5" height="6.5" viewBox="0 0 7.5 6.5"><path d="M0.5 0.5 H2.8 L3.5 1.4 H6.5 V5.5 H0.5 Z" fill="none" stroke="#4a9ad8" stroke-width="0.95"/></svg>
<svg style="left:159px;top:44.5px" width="4" height="10" viewBox="0 0 4 10"><path d="M0.5 0 L3.3 5 L0.5 10" fill="none" stroke="#bdbdbd" stroke-width="0.8"/></svg>
<svg style="left:164.2px;top:46.5px" width="7.5" height="6.5" viewBox="0 0 7.5 6.5"><path d="M0.5 0.5 H2.8 L3.5 1.4 H6.5 V5.5 H0.5 Z" fill="none" stroke="#c98b3e" stroke-width="0.95"/><rect x="2.2" y="2.4" width="2.6" height="2" fill="#c98b3e"/></svg>
<svg style="left:187.5px;top:44.5px" width="4" height="10" viewBox="0 0 4 10"><path d="M0.5 0 L3.3 5 L0.5 10" fill="none" stroke="#bdbdbd" stroke-width="0.8"/></svg>
<svg style="left:193.8px;top:46.5px" width="7.5" height="6.5" viewBox="0 0 7.5 6.5"><path d="M0.5 0.5 H2.8 L3.5 1.4 H6.5 V5.5 H0.5 Z" fill="none" stroke="#c98b3e" stroke-width="0.95"/><rect x="2.2" y="2.4" width="2.6" height="2" fill="#c98b3e"/></svg>
<svg style="left:231.5px;top:44.5px" width="4" height="10" viewBox="0 0 4 10"><path d="M0.5 0 L3.3 5 L0.5 10" fill="none" stroke="#bdbdbd" stroke-width="0.8"/></svg>
<svg style="left:237.2px;top:46.5px" width="7.5" height="6.5" viewBox="0 0 7.5 6.5"><path d="M0.5 0.5 H2.8 L3.5 1.4 H6.5 V5.5 H0.5 Z" fill="none" stroke="#c98b3e" stroke-width="0.95"/><rect x="2.2" y="2.4" width="2.6" height="2" fill="#c98b3e"/></svg>
<svg style="left:277.5px;top:44.5px" width="4" height="10" viewBox="0 0 4 10"><path d="M0.5 0 L3.3 5 L0.5 10" fill="none" stroke="#bdbdbd" stroke-width="0.8"/></svg>
<svg style="left:283px;top:46px" width="8" height="8" viewBox="0 0 8 8"><circle cx="3.8" cy="3.9" r="3.5" fill="#8cc8ef"/><text x="3.8" y="6.2" font-family="Liberation Sans" font-size="6" text-anchor="middle" fill="#1f5f9a">C</text></svg>
<svg style="left:328.6px;top:44.5px" width="4" height="10" viewBox="0 0 4 10"><path d="M0.5 0 L3.3 5 L0.5 10" fill="none" stroke="#bdbdbd" stroke-width="0.8"/></svg>
<svg style="left:16.5px;top:57px" width="8.5" height="8.5" viewBox="0 0 8.5 8.5"><path d="M1 3.2 H7.4 V6.4 H1 Z" fill="#8ac44b"/><path d="M1 2.8 Q4.2 -0.6 7.4 2.8 Z" fill="#8ac44b"/><rect x="0" y="3.2" width="0.9" height="2.8" fill="#8ac44b"/><rect x="7.5" y="3.2" width="0.9" height="2.8" fill="#8ac44b"/><rect x="2.2" y="6.4" width="1.2" height="1.8" fill="#8ac44b"/><rect x="5" y="6.4" width="1.2" height="1.8" fill="#8ac44b"/></svg>
<svg style="left:110px;top:59.8px" width="5" height="3" viewBox="0 0 5 3"><path d="M0.3 0.3 H4.3 L2.3 2.6 Z" fill="#6e6e6e"/></svg>
<div style="left:117.5px;top:56px;width:0.8px;height:10px;background:#cdcdcd;"></div>
<svg style="left:172.8px;top:57px" width="7" height="7" viewBox="0 0 7 7"><circle cx="3.3" cy="3.4" r="2.7" fill="none" stroke="#8a8a8a" stroke-width="1"/><path d="M1.8 1.9 L4.8 4.9 M4.8 1.9 L1.8 4.9" stroke="#8a8a8a" stroke-width="0.8"/></svg>
<svg style="left:184px;top:57px" width="7" height="7" viewBox="0 0 7 7"><path d="M3.3 0 V7 M0 3.5 H6.6" stroke="#8a8a8a" stroke-width="0.8"/><path d="M2 1.3 H4.6 M2 5.7 H4.6 M1.2 2.2 V4.8 M5.4 2.2 V4.8" stroke="#8a8a8a" stroke-width="0.7"/></svg>
<div style="left:194.9px;top:56.5px;width:0.8px;height:9px;background:#cdcdcd;"></div>
<svg style="left:199.4px;top:56.8px" width="10" height="7.5" viewBox="0 0 10 7.5"><circle cx="3.5" cy="3.7" r="1.9000000000000001" fill="none" stroke="#8a8a8a" stroke-width="1.1"/><path d="M5.70 3.70 L6.80 3.70 M5.06 5.26 L5.83 6.03 M3.50 5.90 L3.50 7.00 M1.94 5.26 L1.17 6.03 M1.30 3.70 L0.20 3.70 M1.94 2.14 L1.17 1.37 M3.50 1.50 L3.50 0.40 M5.06 2.14 L5.83 1.37 " stroke="#8a8a8a" stroke-width="1.1"/><path d="M7.6 3.4 H9.6 L8.6 4.6 Z" fill="#8a8a8a"/></svg>
<svg style="left:213px;top:57px" width="8" height="7" viewBox="0 0 8 7"><rect x="0.5" y="0.2" width="1" height="6.6" fill="#7a7a7a"/><rect x="2.5" y="3" width="5" height="0.8" fill="#7a7a7a"/><path d="M2.2 3.4 L4 1.8 L4 5 Z" fill="#7a7a7a"/></svg>
<svg style="left:14.2px;top:69.8px" width="4" height="5" viewBox="0 0 4 5"><path d="M0.3 0.3 L3.6 2.5 L0.3 4.7 Z" fill="#a8a8a8"/></svg>
<svg style="left:14.2px;top:80.3px" width="4" height="5" viewBox="0 0 4 5"><path d="M0.3 0.3 L3.6 2.5 L0.3 4.7 Z" fill="#a8a8a8"/></svg>
<svg style="left:23.5px;top:68.8px" width="8.5" height="7.3" viewBox="0 0 8.5 7.3"><path d="M0.5 0.5 H2.8 L3.5 1.4 H7.5 V6.3 H0.5 Z" fill="none" stroke="#c98b3e" stroke-width="0.95"/><rect x="4.8" y="3.8" width="3" height="3" fill="#4a9ad8"/></svg>
<svg style="left:24px;top:78.8px" width="8" height="8" viewBox="0 0 8 8"><circle cx="3.8" cy="3.8" r="3" fill="none" stroke="#3db249" stroke-width="1.3" stroke-dasharray="13 6"/><circle cx="3.8" cy="3.8" r="1.3" fill="#3db249"/></svg>
<svg style="left:228.8px;top:58.3px" width="6.8" height="6.5" viewBox="0 0 6.8 6.5"><rect x="0.3" y="0.3" width="6.2" height="6" rx="0.5" fill="#f2b34a"/><text x="3.4" y="4.8" font-family="Liberation Sans" font-size="3.6" font-weight="bold" text-anchor="middle" fill="#7a4a10">&lt;/&gt;</text></svg>
<svg style="left:288.6px;top:59.3px" width="4" height="4" viewBox="0 0 4 4"><path d="M0.5 0.5 L3.5 3.5 M3.5 0.5 L0.5 3.5" stroke="#555" stroke-width="0.9"/></svg>
<svg style="left:302px;top:57.2px" width="7.5" height="7.5" viewBox="0 0 7.5 7.5"><circle cx="3.6" cy="3.7" r="3.4" fill="#8cc8ef"/><text x="3.6" y="6" font-family="Liberation Sans" font-size="5.8" text-anchor="middle" fill="#1f5f9a">C</text></svg>
<svg style="left:361.2px;top:59.3px" width="4" height="4" viewBox="0 0 4 4"><path d="M0.5 0.5 L3.5 3.5 M3.5 0.5 L0.5 3.5" stroke="#555" stroke-width="0.9"/></svg>
<div style="left:369px;top:55.3px;width:0.8px;height:11.3px;background:#bcbcbc;"></div>
<div class="t" style="left:3.91px;top:84.20px;font-family:'Liberation Sans';font-size:5.9px;line-height:5.9px;color:#111;font-weight:normal;font-style:normal;transform:rotate(-90deg) scaleX(0.7794);-webkit-text-stroke:0.2px #111;">1: Project</div>
<svg style="left:3px;top:86px" width="7.2" height="6.8" viewBox="0 0 7.2 6.8"><circle cx="3.6" cy="3.4" r="3.3" fill="#6fbf3e"/><path d="M1.8 4.6 Q3.6 1.8 5.4 4.6 Z" fill="#e9f6dc"/></svg>
<div class="t" style="left:3.91px;top:134.70px;font-family:'Liberation Sans';font-size:5.9px;line-height:5.9px;color:#111;font-weight:normal;font-style:normal;transform:rotate(-90deg) scaleX(0.8275);-webkit-text-stroke:0.2px #111;">2: Structure</div>
<svg style="left:2.5px;top:135.5px" width="7.5" height="8" viewBox="0 0 7.5 8"><circle cx="1.8" cy="1.8" r="1.5" fill="#4a9ad8"/><circle cx="5.6" cy="1.8" r="1.5" fill="#e06060"/><path d="M1.8 3 L3.7 6 L5.6 3" stroke="#999" stroke-width="0.6" fill="none"/><rect x="2.6" y="5.4" width="2.2" height="2.2" fill="#e0a040"/></svg>
<div class="t" style="left:3.91px;top:177.00px;font-family:'Liberation Sans';font-size:5.9px;line-height:5.9px;color:#111;font-weight:normal;font-style:normal;transform:rotate(-90deg) scaleX(0.7948);-webkit-text-stroke:0.2px #111;">Captures</div>
<svg style="left:2.8px;top:179.8px" width="7" height="7" viewBox="0 0 7 7"><circle cx="3.5" cy="3.5" r="3" fill="#a9c3de"/><circle cx="3.5" cy="3.5" r="1.6" fill="#3d8fd4"/></svg>
<div class="t" style="left:3.91px;top:430.30px;font-family:'Liberation Sans';font-size:5.9px;line-height:5.9px;color:#111;font-weight:normal;font-style:normal;transform:rotate(-90deg) scaleX(0.8574);-webkit-text-stroke:0.2px #111;">Build Variants</div>
<svg style="left:2.5px;top:432px" width="7.5" height="7" viewBox="0 0 7.5 7"><path d="M1 2.8 H6.4 V5.6 H1 Z M1 2.5 Q3.7 -0.4 6.4 2.5 Z" fill="#8ac44b"/><rect x="2" y="5.6" width="1.2" height="1.4" fill="#8ac44b"/><rect x="4.3" y="5.6" width="1.2" height="1.4" fill="#8ac44b"/></svg>
<div class="t" style="left:3.91px;top:479.00px;font-family:'Liberation Sans';font-size:5.9px;line-height:5.9px;color:#111;font-weight:normal;font-style:normal;transform:rotate(-90deg) scaleX(0.7570);-webkit-text-stroke:0.2px #111;">2: Favorites</div>
<svg style="left:2.3px;top:482.8px" width="7.5" height="7.2" viewBox="0 0 7.5 7.2"><path d="M3.75 0.2 L4.7 2.6 L7.3 2.7 L5.3 4.3 L6 6.9 L3.75 5.5 L1.5 6.9 L2.2 4.3 L0.2 2.7 L2.8 2.6 Z" fill="#eba53a"/></svg>
<div class="t" style="left:867.99px;top:69.50px;font-family:'Liberation Sans';font-size:5.9px;line-height:5.9px;color:#111;font-weight:bold;font-style:normal;transform:rotate(90deg) scaleX(0.9265);">Gradle</div>
<svg style="left:862px;top:60.4px" width="7" height="6.8" viewBox="0 0 7 6.8"><circle cx="3.5" cy="3.4" r="2.9" fill="none" stroke="#5cb85c" stroke-width="1" stroke-dasharray="12 4"/><circle cx="3.5" cy="3.4" r="1.4" fill="#1f9a3a"/></svg>
<div class="t" style="left:867.99px;top:448.90px;font-family:'Liberation Sans';font-size:5.9px;line-height:5.9px;color:#111;font-weight:bold;font-style:normal;transform:rotate(90deg) scaleX(0.9943);">Android Model</div>
<svg style="left:861.8px;top:441.3px" width="6" height="6" viewBox="0 0 6 6"><path d="M0.6 1.2 H5.4 V4.8 H0.6 Z" fill="#8ac44b"/><rect x="1.4" y="0" width="1" height="1.2" fill="#8ac44b"/><rect x="3.6" y="0" width="1" height="1.2" fill="#8ac44b"/></svg>
<svg style="left:233px;top:122.3px" width="7" height="7.5" viewBox="0 0 7 7.5"><rect x="0.5" y="0.5" width="5.8" height="6.8" rx="1" fill="#d8d8d8"/><rect x="0.3" y="2.5" width="6.2" height="3.6" fill="#f2b134"/><rect x="1.5" y="3.6" width="1" height="1" fill="#7a4a10"/><rect x="4.2" y="3.6" width="1" height="1" fill="#7a4a10"/></svg>
<svg style="left:227px;top:149px" width="6.5" height="7" viewBox="0 0 6.5 7"><circle cx="2" cy="3.6" r="1.5" fill="#fff" stroke="#3d8fd4" stroke-width="1"/><path d="M4.8 6.5 V1.2" stroke="#e05050" stroke-width="0.7"/><path d="M3.8 2.2 L4.8 0.6 L5.8 2.2 Z" fill="#e05050"/></svg>
<svg style="left:234px;top:149.2px" width="7.5" height="7" viewBox="0 0 7.5 7"><circle cx="3.5" cy="3.6" r="3.2" fill="#e05a4a"/><circle cx="3.5" cy="3.6" r="1.9" fill="#f7c8c0"/><path d="M2.4 3.6 L3.4 4.7 L6.6 0.6" stroke="#7a1d10" stroke-width="0.9" fill="none"/></svg>
<svg style="left:234px;top:183.8px" width="7.5" height="7" viewBox="0 0 7.5 7"><circle cx="3.5" cy="3.6" r="3.2" fill="#e05a4a"/><circle cx="3.5" cy="3.6" r="1.9" fill="#f7c8c0"/><path d="M2.4 3.6 L3.4 4.7 L6.6 0.6" stroke="#7a1d10" stroke-width="0.9" fill="none"/></svg>
<svg style="left:247.3px;top:89.5px" width="5" height="5" viewBox="0 0 5 5"><rect x="0.5" y="0.5" width="4" height="4" fill="#fff" stroke="#c8c8c8" stroke-width="0.6"/><path d="M1.3 2.5 H3.7" stroke="#9a9a9a" stroke-width="0.5"/></svg>
<svg style="left:247.3px;top:106.8px" width="5" height="5" viewBox="0 0 5 5"><rect x="0.5" y="0.5" width="4" height="4" fill="#fff" stroke="#c8c8c8" stroke-width="0.6"/><path d="M1.3 2.5 H3.7" stroke="#9a9a9a" stroke-width="0.5"/></svg>
<svg style="left:247.3px;top:150.5px" width="5" height="5" viewBox="0 0 5 5"><rect x="0.5" y="0.5" width="4" height="4" fill="#fff" stroke="#c8c8c8" stroke-width="0.6"/><path d="M1.3 2.5 H3.7" stroke="#9a9a9a" stroke-width="0.5"/></svg>
<svg style="left:247.3px;top:185px" width="5" height="5" viewBox="0 0 5 5"><rect x="0.5" y="0.5" width="4" height="4" fill="#fff" stroke="#c8c8c8" stroke-width="0.6"/><path d="M1.3 2.5 H3.7" stroke="#9a9a9a" stroke-width="0.5"/></svg>
<svg style="left:34px;top:322.5px" width="8.5" height="7" viewBox="0 0 8.5 7"><path d="M0.5 0.5 H3 L3.6 1.3 H7.5 V6.5 H0.5 Z" fill="#f7e9b8" stroke="#d4b866" stroke-width="0.7"/><path d="M3.5 6.5 Q5.5 3.6 7.8 6.5 Z" fill="#8ac44b"/></svg>
<svg style="left:835px;top:321.7px" width="8" height="8" viewBox="0 0 8 8"><circle cx="3.5" cy="3.7" r="1.9000000000000001" fill="none" stroke="#555" stroke-width="1.1"/><path d="M5.70 3.70 L6.80 3.70 M5.06 5.26 L5.83 6.03 M3.50 5.90 L3.50 7.00 M1.94 5.26 L1.17 6.03 M1.30 3.70 L0.20 3.70 M1.94 2.14 L1.17 1.37 M3.50 1.50 L3.50 0.40 M5.06 2.14 L5.83 1.37 " stroke="#555" stroke-width="1.1"/></svg>
<div style="left:843.5px;top:325.6px;width:2.2px;height:0.7px;background:#555;"></div>
<svg style="left:850px;top:321.5px" width="7" height="8" viewBox="0 0 7 8"><path d="M3.5 0.5 V4.5" stroke="#555" stroke-width="0.7"/><rect x="0.5" y="5.5" width="6" height="0.8" fill="#555"/><rect x="0.5" y="6.8" width="6" height="0.7" fill="#888"/></svg>
<svg style="left:63px;top:334px" width="7.5" height="7.5" viewBox="0 0 7.5 7.5"><rect x="0.5" y="0.5" width="6.5" height="6.5" fill="#e8eef5" stroke="#4a7fb8" stroke-width="0.8"/><rect x="1.8" y="2.5" width="3.5" height="0.7" fill="#4a7fb8"/><rect x="1.8" y="4.2" width="2.5" height="0.7" fill="#4a7fb8"/></svg>
<svg style="left:96.8px;top:335.5px" width="7" height="4.5" viewBox="0 0 7 4.5"><path d="M0 2.6 H4 M2.8 1.3 L4.2 2.6 L2.8 3.9" stroke="#666" stroke-width="0.7" fill="none"/><rect x="5.3" y="0.3" width="1" height="1.3" fill="#666"/></svg>
<svg style="left:107px;top:333.5px" width="8.5" height="8" viewBox="0 0 8.5 8"><path d="M0.3 0.3 L4 3 L0.3 5.7 Z" fill="#e05a4a"/><rect x="3.5" y="3" width="4.8" height="1" fill="#3d8fd4"/><rect x="3.5" y="5" width="4.8" height="1" fill="#777"/><rect x="3.5" y="7" width="4.8" height="1" fill="#3d8fd4"/></svg>
<svg style="left:123.3px;top:333.5px" width="8" height="8" viewBox="0 0 8 8"><rect x="0.3" y="0.2" width="7.2" height="0.8" fill="#777"/><path d="M3.9 1.5 V4.2" stroke="#3d8fd4" stroke-width="1.4"/><path d="M1.6 3.6 H6.2 L3.9 6 Z" fill="#3d8fd4"/><rect x="0.3" y="7" width="7.2" height="0.8" fill="#777"/></svg>
<svg style="left:136px;top:333.5px" width="8" height="8" viewBox="0 0 8 8"><path d="M0.8 0.8 L5 5" stroke="#3d8fd4" stroke-width="1.4"/><path d="M6.2 2.4 V6.2 H2.4 Z" fill="#3d8fd4"/><rect x="0.5" y="7" width="7" height="0.8" fill="#777"/></svg>
<svg style="left:148.8px;top:333.5px" width="8.5" height="8" viewBox="0 0 8.5 8"><path d="M0.8 0.8 L5 5" stroke="#e05a4a" stroke-width="1.4"/><path d="M6.2 2.4 V6.2 H2.4 Z" fill="#e05a4a"/><rect x="0.5" y="7" width="7.5" height="0.8" fill="#777"/></svg>
<svg style="left:162px;top:333.5px" width="8" height="8" viewBox="0 0 8 8"><path d="M1.5 6 L5.8 1.8" stroke="#3d8fd4" stroke-width="1.4"/><path d="M2.4 0.8 H6.8 V5.2 Z" fill="#3d8fd4"/><rect x="0.5" y="7" width="7" height="0.8" fill="#777"/></svg>
<svg style="left:174.7px;top:333.5px" width="8.5" height="8" viewBox="0 0 8.5 8"><path d="M0.5 0.5 L3.5 3.5 M3.5 0.5 L0.5 3.5" stroke="#777" stroke-width="0.8"/><rect x="2.5" y="3" width="5.5" height="4.5" fill="none" stroke="#8a8a8a" stroke-width="0.8"/><rect x="4" y="4.8" width="2.5" height="1" fill="#8a8a8a"/></svg>
<svg style="left:187.4px;top:333.5px" width="8.5" height="8.5" viewBox="0 0 8.5 8.5"><path d="M0.5 0.5 L4 4" stroke="#3d8fd4" stroke-width="1.3"/><path d="M4.8 1.4 V4.8 H1.4 Z" fill="#3d8fd4"/><path d="M5.5 3.5 H8 M6.75 3.5 V8 M5.5 8 H8" stroke="#222" stroke-width="0.6"/></svg>
<svg style="left:203.8px;top:333.5px" width="8" height="8" viewBox="0 0 8 8"><rect x="0.5" y="0.8" width="7" height="6.5" fill="#fff" stroke="#8a8a8a" stroke-width="0.8"/><rect x="0.5" y="0.8" width="7" height="1.8" fill="#8a8a8a"/><rect x="1.8" y="3.8" width="2" height="1" fill="#3d8fd4"/><rect x="4.5" y="5" width="2" height="1.2" fill="#e0a040"/></svg>
<svg style="left:848.8px;top:333.5px" width="8" height="8.5" viewBox="0 0 8 8.5"><rect x="0.5" y="3" width="3.5" height="5" fill="#4a9ad8"/><rect x="3.8" y="0.5" width="3.8" height="5.8" fill="#f2b134"/><path d="M4 2 H7.5 M4 4 H7.5" stroke="#8a5a10" stroke-width="0.5"/></svg>
<svg style="left:29.8px;top:349.5px" width="7" height="7.5" viewBox="0 0 7 7.5"><rect x="0.5" y="0.5" width="6" height="6.5" fill="#e8eef5" stroke="#8a9ab0" stroke-width="0.8"/><rect x="2" y="3" width="3" height="2.5" fill="#4a9ad8"/></svg>
<svg style="left:183px;top:351px" width="7" height="4.5" viewBox="0 0 7 4.5"><path d="M0 2.6 H4 M2.8 1.3 L4.2 2.6 L2.8 3.9" stroke="#666" stroke-width="0.7" fill="none"/><rect x="5.3" y="0.3" width="1" height="1.3" fill="#666"/></svg>
<svg style="left:194px;top:350px" width="7" height="6.5" viewBox="0 0 7 6.5"><rect x="0.3" y="0.3" width="6.4" height="6" fill="#f7e3b8"/><path d="M0.3 1 H6.7 M0.3 3.2 H6.7 M0.3 5.4 H6.7" stroke="#c08a3a" stroke-width="1.1"/></svg>
<svg style="left:690px;top:351px" width="7" height="4.5" viewBox="0 0 7 4.5"><path d="M0 2.6 H4 M2.8 1.3 L4.2 2.6 L2.8 3.9" stroke="#666" stroke-width="0.7" fill="none"/><rect x="5.3" y="0.3" width="1" height="1.3" fill="#666"/></svg>
<svg style="left:698.6px;top:349.5px" width="7.5" height="7.5" viewBox="0 0 7.5 7.5"><rect x="0.5" y="0.5" width="6.5" height="6.5" fill="#d6e6f4" stroke="#7a9ab8" stroke-width="0.7"/><path d="M1.5 5.5 L3 3.5 L4.5 5 L6 2" stroke="#3db249" stroke-width="0.9" fill="none"/></svg>
<svg style="left:852.6px;top:351px" width="7" height="4.5" viewBox="0 0 7 4.5"><path d="M0 2.6 H4 M2.8 1.3 L4.2 2.6 L2.8 3.9" stroke="#666" stroke-width="0.7" fill="none"/><rect x="5.3" y="0.3" width="1" height="1.3" fill="#666"/></svg>
<svg style="left:31.8px;top:363px" width="7.5" height="7.5" viewBox="0 0 7.5 7.5"><rect x="0.3" y="0.5" width="2.4" height="6.6" fill="#e0a040"/><circle cx="4.2" cy="3.9" r="3" fill="#e05a4a"/><path d="M2.8 3.8 L3.9 5 L6 2.2" stroke="#fff" stroke-width="0.9" fill="none"/></svg>
<svg style="left:140.8px;top:366.3px" width="5.5" height="3.5" viewBox="0 0 5.5 3.5"><path d="M0.3 0.3 H5 L2.65 3 Z" fill="#fff"/></svg>
<svg style="left:154.6px;top:363.5px" width="7" height="7.5" viewBox="0 0 7 7.5"><path d="M3.5 0.3 L6.8 3.6 H4.5 V7.2 H2.5 V3.6 H0.2 Z" fill="#8a8a8a"/></svg>
<svg style="left:167.8px;top:363.5px" width="7" height="7.5" viewBox="0 0 7 7.5"><path d="M3.5 7.2 L6.8 3.9 H4.5 V0.3 H2.5 V3.9 H0.2 Z" fill="#3d8fd4"/></svg>
<svg style="left:180.8px;top:363.5px" width="7" height="7.5" viewBox="0 0 7 7.5"><path d="M0.2 0.5 H6.8 L4.2 3.8 V7.2 L2.8 6.2 V3.8 Z" fill="#3d8fd4"/></svg>
<svg style="left:193.5px;top:363.5px" width="4" height="5" viewBox="0 0 4 5"><path d="M0.3 0.3 L3.6 2.5 L0.3 4.7 Z" fill="#a8a8a8"/></svg>
<svg style="left:203px;top:363.5px" width="7" height="6.5" viewBox="0 0 7 6.5"><rect x="0.3" y="0.3" width="6.4" height="6" fill="#f7e3b8"/><path d="M0.3 1 H6.7 M0.3 3.2 H6.7 M0.3 5.4 H6.7" stroke="#c08a3a" stroke-width="1.1"/></svg>
<svg style="left:203px;top:373.7px" width="7" height="6.5" viewBox="0 0 7 6.5"><rect x="0.3" y="0.3" width="6.4" height="6" fill="#f7e3b8"/><path d="M0.3 1 H6.7 M0.3 3.2 H6.7 M0.3 5.4 H6.7" stroke="#c08a3a" stroke-width="1.1"/></svg>
<svg style="left:699.5px;top:363.3px" width="7" height="7" viewBox="0 0 7 7"><path d="M3.5 0.5 V6.5 M0.5 3.5 H6.5" stroke="#3db249" stroke-width="1.3"/></svg>
<div style="left:712px;top:366.9px;width:7px;height:1px;background:#9a9a9a;"></div>
<svg style="left:725.5px;top:363.5px" width="6" height="7" viewBox="0 0 6 7"><path d="M3 0.3 L5.8 3.2 H4 V6.8 H2 V3.2 H0.2 Z" fill="#9a9a9a"/></svg>
<svg style="left:738.5px;top:363.5px" width="6" height="7" viewBox="0 0 6 7"><path d="M3 6.8 L5.8 3.9 H4 V0.3 H2 V3.9 H0.2 Z" fill="#9a9a9a"/></svg>
<svg style="left:751.5px;top:363.3px" width="7" height="7.5" viewBox="0 0 7 7.5"><rect x="0.5" y="1.8" width="4.5" height="5.4" fill="none" stroke="#9a9a9a" stroke-width="0.8"/><rect x="2.5" y="0.4" width="4" height="5" fill="#ececec" stroke="#9a9a9a" stroke-width="0.8"/></svg>
<svg style="left:16px;top:334.7px" width="7.5" height="7.5" viewBox="0 0 7.5 7.5"><rect x="0.2" y="0.3" width="1.2" height="7" fill="#3db249"/><path d="M1.8 0.3 L7.3 3.8 L1.8 7.3 Z" fill="#3db249"/></svg>
<svg style="left:16.3px;top:348.2px" width="6.5" height="6.5" viewBox="0 0 6.5 6.5"><rect x="0.5" y="0" width="2" height="6.3" fill="#a8a8a8"/><rect x="4" y="0" width="2" height="6.3" fill="#a8a8a8"/></svg>
<svg style="left:16px;top:361px" width="6.2" height="6.2" viewBox="0 0 6.2 6.2"><rect x="0" y="0" width="6.1" height="6.1" fill="#e05a4a"/></svg>
<svg style="left:15.5px;top:376.4px" width="8.5" height="7.5" viewBox="0 0 8.5 7.5"><circle cx="2.6" cy="2" r="1.8" fill="#e05a4a"/><circle cx="2.6" cy="5.3" r="1.8" fill="#e05a4a"/><rect x="5.5" y="1.5" width="1" height="1" fill="#888"/><rect x="5.5" y="4.5" width="1" height="1" fill="#888"/></svg>
<svg style="left:15.8px;top:389.3px" width="7" height="7" viewBox="0 0 7 7"><circle cx="3.5" cy="3.5" r="3" fill="#e07060"/><circle cx="3.5" cy="3.5" r="3" fill="none" stroke="#9a9a9a" stroke-width="0.6"/><path d="M0.8 6 L6.2 1" stroke="#fff" stroke-width="0.8"/></svg>
<svg style="left:15.5px;top:404.8px" width="8" height="7.5" viewBox="0 0 8 7.5"><rect x="0.5" y="1" width="7" height="6" fill="#d8e6f2" stroke="#6a7f95" stroke-width="0.8"/><rect x="2" y="3" width="4" height="2.6" fill="#3d8fd4"/></svg>
<svg style="left:15.5px;top:420.7px" width="8" height="7.5" viewBox="0 0 8 7.5"><rect x="0.5" y="0.5" width="7" height="6.5" fill="#e8eef5" stroke="#6a7f95" stroke-width="0.8"/><rect x="1.5" y="1.5" width="5" height="1.6" fill="#6a7f95"/><rect x="1.5" y="4.3" width="2" height="1.8" fill="#3d8fd4"/></svg>
<svg style="left:15.5px;top:434.3px" width="9" height="8" viewBox="0 0 9 8"><circle cx="3.5" cy="3.7" r="1.9000000000000001" fill="none" stroke="#2f79c4" stroke-width="1.1"/><path d="M5.70 3.70 L6.80 3.70 M5.06 5.26 L5.83 6.03 M3.50 5.90 L3.50 7.00 M1.94 5.26 L1.17 6.03 M1.30 3.70 L0.20 3.70 M1.94 2.14 L1.17 1.37 M3.50 1.50 L3.50 0.40 M5.06 2.14 L5.83 1.37 " stroke="#2f79c4" stroke-width="1.1"/><path d="M6.5 6.5 H8.8 L7.65 7.8 Z" fill="#555"/></svg>
<svg style="left:15.8px;top:449.3px" width="7.5" height="7.5" viewBox="0 0 7.5 7.5"><path d="M0.8 6.8 L3.5 4" stroke="#8a8a8a" stroke-width="0.8"/><path d="M2.5 3 L5 0.5 L7 2.5 L4.5 5 Z" fill="#9f78c8"/></svg>
<svg style="left:16px;top:463px" width="6.5" height="6.5" viewBox="0 0 6.5 6.5"><path d="M0.6 0.6 L5.9 5.9 M5.9 0.6 L0.6 5.9" stroke="#e05a4a" stroke-width="1.2"/></svg>
<div class="t" style="left:16.00px;top:474.74px;font-family:'Liberation Sans';font-size:10px;line-height:10px;color:#3d9be0;font-weight:bold;font-style:normal;transform:scaleX(0.8500);">?</div>
<svg style="left:15.5px;top:497.5px" width="7.5" height="8" viewBox="0 0 7.5 8"><path d="M0.3 0.3 L6 3.8 L0.3 7.3 Z" fill="#3db249"/><circle cx="6" cy="6.6" r="1.2" fill="#3db249"/></svg>
<svg style="left:52.5px;top:497.5px" width="7.5" height="8" viewBox="0 0 7.5 8"><rect x="0.5" y="2" width="3.5" height="5" fill="#9a9a9a"/><rect x="1.2" y="0.5" width="2" height="1.5" fill="#9a9a9a"/><path d="M3.5 3.8 L7 5.8 L3.5 7.8 Z" fill="#3db249"/></svg>
<svg style="left:94.7px;top:497.3px" width="8" height="8" viewBox="0 0 8 8"><rect x="0.5" y="0.5" width="7" height="3" fill="#d0d0d0" stroke="#8a8a8a" stroke-width="0.6"/><rect x="2.5" y="3.5" width="3.5" height="4" fill="#f2b134"/><rect x="2.8" y="4.5" width="3" height="3" fill="#3d8fd4"/></svg>
<svg style="left:130.8px;top:497.3px" width="7.5" height="7.5" viewBox="0 0 7.5 7.5"><path d="M1 2.8 H6.4 V5.6 H1 Z M1 2.5 Q3.7 -0.4 6.4 2.5 Z" fill="#6fb33a"/><rect x="2" y="5.6" width="1.2" height="1.8" fill="#6fb33a"/><rect x="4.3" y="5.6" width="1.2" height="1.8" fill="#6fb33a"/></svg>
<svg style="left:203px;top:497.8px" width="6" height="6.5" viewBox="0 0 6 6.5"><rect x="0.4" y="0.4" width="5.2" height="5.6" fill="#bdbdbd" stroke="#7a7a7a" stroke-width="0.7"/><path d="M1.3 2 H4.5 M1.3 3.3 H4.5" stroke="#555" stroke-width="0.5"/></svg>
<svg style="left:246px;top:497.8px" width="6" height="6.5" viewBox="0 0 6 6.5"><rect x="0.2" y="0.2" width="5.6" height="6" fill="#f2b134"/><path d="M1.2 2 H4.8 M1.2 3.5 H4.8" stroke="#a06a10" stroke-width="0.6"/></svg>
<svg style="left:756.2px;top:497.5px" width="10" height="7.5" viewBox="0 0 10 7.5"><rect x="0.3" y="0.3" width="5" height="5" fill="#5cb85c"/><path d="M1 1.5 H4.5 M1 3 H4.5" stroke="#2f7a2f" stroke-width="0.5"/></svg>
<div class="t" style="left:762.20px;top:499.72px;font-family:'Liberation Sans';font-size:6px;line-height:6px;color:#333;font-weight:normal;font-style:normal;transform:scaleX(0.9000);">2</div>
<svg style="left:804.5px;top:497.6px" width="7" height="7" viewBox="0 0 7 7"><rect x="0.4" y="0.4" width="6.2" height="6.2" fill="#d8e6f2" stroke="#5a87b5" stroke-width="0.7"/><path d="M1.6 2.3 H5.2 M1.6 3.7 H4 M1.6 5 H5.2" stroke="#5a87b5" stroke-width="0.6"/></svg>
<svg style="left:5.2px;top:509px" width="7" height="7" viewBox="0 0 7 7"><rect x="0.4" y="0.4" width="6.2" height="6.2" fill="#dcdcdc" stroke="#8a8a8a" stroke-width="0.8"/></svg>
<svg style="left:848.5px;top:510.5px" width="6" height="6" viewBox="0 0 6 6"><path d="M1.2 2.8 V1.6 A1.6 1.6 0 0 1 4.4 1.6" fill="none" stroke="#555" stroke-width="0.7"/><rect x="1.5" y="2.8" width="4" height="3" fill="#555"/></svg>
<svg style="left:859.8px;top:508.8px" width="7.5" height="8.5" viewBox="0 0 7.5 8.5"><circle cx="3.7" cy="2.8" r="2.3" fill="none" stroke="#666" stroke-width="0.8"/><path d="M0.8 8 V6 Q3.7 4.2 6.6 6 V8" fill="none" stroke="#666" stroke-width="0.8"/></svg>
</body></html>
